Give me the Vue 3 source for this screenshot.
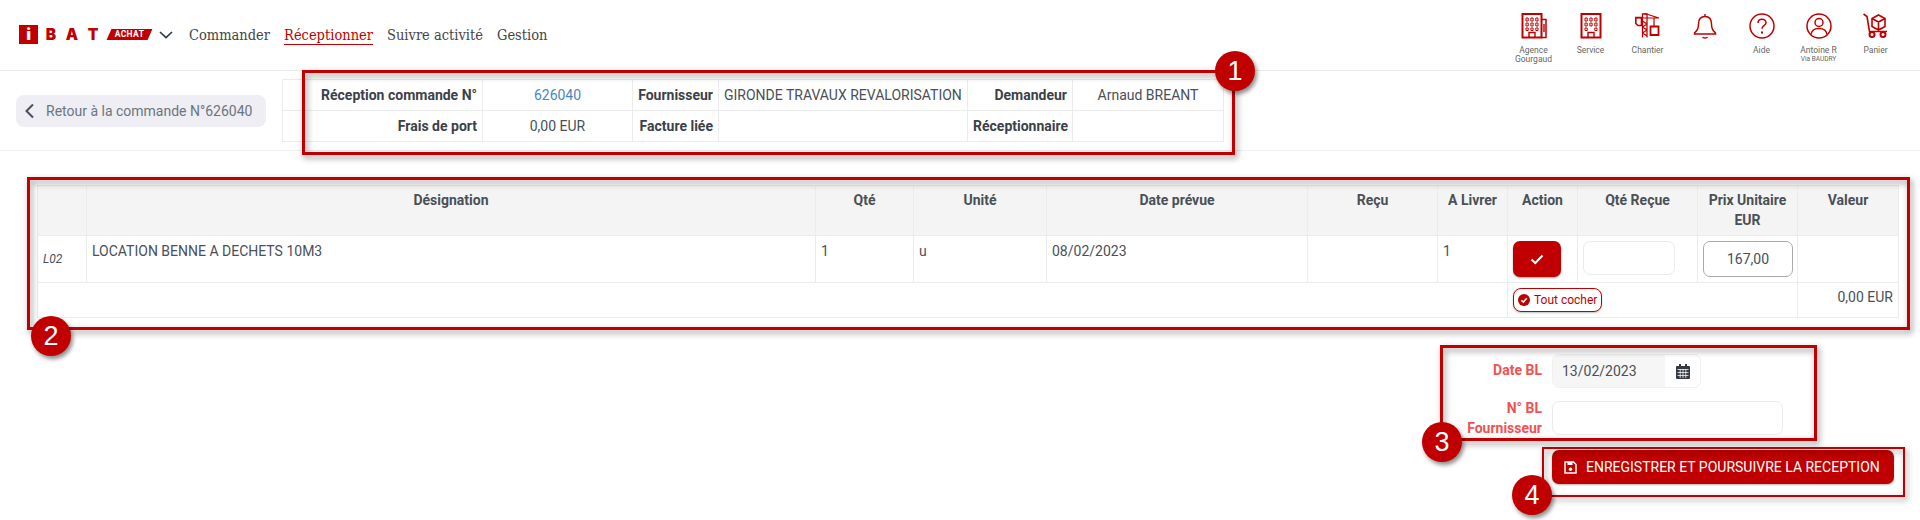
<template>
  <div class="page">
    <header class="topbar">
      <div class="brand">
        <span class="brand-i">i</span>
        <span class="brand-letter">B</span>
        <span class="brand-letter">A</span>
        <span class="brand-letter">T</span>
        <span class="brand-tag"><span>ACHAT</span></span>
        <svg class="brand-chevron" width="14" height="8" viewBox="0 0 14 8" fill="none">
          <path d="M1 1l6 5.600L13 1" stroke="#2f3b4c" stroke-width="1.700" />
        </svg>
      </div>
      <nav class="menu">
        <a v-for="item in menu" :key="item" class="menu-item" :class="{ active: item === 'Réceptionner' }">{{ item }}</a>
      </nav>
      <div class="shortcuts">
        <div class="shortcut">
          <svg width="26" height="26" viewBox="0 0 26 26" fill="none" stroke="#c00000">
            <path d="M1.500 1h19v23.500h-19z" stroke-width="2" />
            <path d="M20.500 6.500h4.500v18h-4.500" stroke-width="1.500" />
            <path d="M8 24.500v-5h6v5M23 11v8" stroke-width="1.400" />
            <path d="M5 5h2.200v3H5zM9.900 5h2.200v3H9.900zM14.800 5H17v3h-2.200zM5 10h2.200v3H5zM9.900 10h2.200v3H9.900zM14.800 10H17v3h-2.200zM5 15h2.200v2.500H5zM9.900 15h2.200v2.500H9.900zM14.800 15H17v2.500h-2.200z" stroke-width="1" />
          </svg>
          <span>Agence<br />Gourgaud</span>
        </div>
        <div class="shortcut">
          <svg width="26" height="26" viewBox="0 0 26 26" fill="none" stroke="#c00000">
            <path d="M3.500 1h19v23.500h-19z" stroke-width="2" />
            <path d="M10 24.500v-5h6v5" stroke-width="1.400" />
            <path d="M7 5h2.200v3H7zM11.900 5h2.200v3h-2.200zM16.800 5H19v3h-2.200zM7 10h2.200v3H7zM11.900 10h2.200v3h-2.200zM16.800 10H19v3h-2.200zM7 15h2.200v2.500H7zM16.800 15H19v2.500h-2.200z" stroke-width="1" />
          </svg>
          <span>Service</span>
        </div>
        <div class="shortcut">
          <svg width="26" height="26" viewBox="0 0 26 26" fill="none" stroke="#c00000">
            <path d="M7.500 24.500V1h4.500v23.500M7.500 8l4.500 3M12 11l-4.500 3M7.500 14l4.500 3M12 17l-4.500 3M7.500 20l4.500 3" stroke-width="1.300" />
            <path d="M9.500 .5L24 5M.8 5H24M19 5v8" stroke-width="1.200" />
            <path d="M.8 4.500h5.700v8H3L.8 10.500z" stroke-width="1.600" />
            <path d="M15.500 13.500h8v8.500h-8z" stroke-width="1.800" />
          </svg>
          <span>Chantier</span>
        </div>
        <div class="shortcut">
          <svg width="24" height="26" viewBox="0 0 24 26" fill="none" stroke="#c00000" stroke-width="1.500">
            <path d="M12 1v2.500M12 3.500c-4.500 0-6.500 3.500-6.500 7.500 0 5-1.500 6.500-4 9v1h21v-1c-2.500-2.500-4-4-4-9 0-4-2-7.500-6.500-7.500z" />
            <path d="M9.500 24c.6 1.300 4.400 1.300 5 0" />
          </svg>
          <span></span>
        </div>
        <div class="shortcut">
          <svg width="26" height="26" viewBox="0 0 26 26" fill="none" stroke="#c00000" stroke-width="1.500">
            <circle cx="13" cy="13" r="12" />
            <path d="M9 10c0-2.500 2-3.800 4-3.800s4 1.300 4 3.500c0 3-4 3-4 6" />
            <path d="M12 18.500h2v2h-2z" fill="#c00000" stroke="none" />
          </svg>
          <span>Aide</span>
        </div>
        <div class="shortcut">
          <svg width="26" height="26" viewBox="0 0 26 26" fill="none" stroke="#c00000" stroke-width="1.500">
            <circle cx="13" cy="13" r="12" />
            <circle cx="13" cy="9.500" r="4" />
            <path d="M5 21.500c.5-4 3.500-6 8-6s7.500 2 8 6" />
          </svg>
          <span>Antoine R<small>Via BAUDRY</small></span>
        </div>
        <div class="shortcut">
          <svg width="26" height="26" viewBox="0 0 26 26" fill="none" stroke="#c00000">
            <path d="M.5 1L4 3.500l2.500 15H24" stroke-width="1.600" />
            <path d="M15.500 2l6.500 3.500v8l-6.500 3.500-6.500-3.500v-8zM9 5.500l6.500 3.500L22 5.500M15.500 9v8" stroke-width="1.600" />
            <circle cx="9" cy="21.500" r="2.500" stroke-width="2" />
            <circle cx="20" cy="21.500" r="2.500" stroke-width="2" />
          </svg>
          <span>Panier</span>
        </div>
      </div>
    </header>

    <section class="summary">
      <button class="back">
        <svg width="11" height="16" viewBox="0 0 11 16" fill="none">
          <path d="M9 1.500L2.500 8 9 14.500" stroke="#495057" stroke-width="2" />
        </svg>
        Retour à la commande N°626040
      </button>
      <table class="info">
        <colgroup>
          <col class="c1" /><col class="c2" /><col class="c3" /><col class="c4" /><col class="c5" /><col class="c6" />
        </colgroup>
        <tbody>
          <tr>
            <th>Réception commande N°</th>
            <td class="center link">626040</td>
            <th>Fournisseur</th>
            <td>GIRONDE TRAVAUX REVALORISATION</td>
            <th>Demandeur</th>
            <td class="center">Arnaud BREANT</td>
          </tr>
          <tr>
            <th>Frais de port</th>
            <td class="center">0,00 EUR</td>
            <th>Facture liée</th>
            <td></td>
            <th>Réceptionnaire</th>
            <td></td>
          </tr>
        </tbody>
      </table>
    </section>

    <table class="lines">
      <colgroup>
        <col v-for="w in lineCols" :key="w.key" :class="w.key" />
      </colgroup>
      <thead>
        <tr>
          <th></th>
          <th>Désignation</th>
          <th>Qté</th>
          <th>Unité</th>
          <th>Date prévue</th>
          <th>Reçu</th>
          <th>A Livrer</th>
          <th>Action</th>
          <th>Qté Reçue</th>
          <th>Prix Unitaire<br />EUR</th>
          <th>Valeur</th>
        </tr>
      </thead>
      <tbody>
        <tr class="row">
          <td class="ref">L02</td>
          <td>LOCATION BENNE A DECHETS 10M3</td>
          <td>1</td>
          <td>u</td>
          <td>08/02/2023</td>
          <td></td>
          <td>1</td>
          <td class="tight">
            <button class="check">
              <svg width="14" height="11" viewBox="0 0 14 11" fill="none">
                <path d="M1.500 5.500l3.800 3.500 7.200-7.500" stroke="#fff" stroke-width="2" />
              </svg>
            </button>
          </td>
          <td class="tight"><div class="qty"></div></td>
          <td class="tight"><div class="price">167,00</div></td>
          <td></td>
        </tr>
        <tr class="foot">
          <td colspan="7"></td>
          <td colspan="3" class="tight">
            <button class="all">
              <svg width="12" height="12" viewBox="0 0 12 12">
                <circle cx="6" cy="6" r="6" fill="#c00000" />
                <path d="M3.300 6.200l2 1.900 3.500-3.800" fill="none" stroke="#fff" stroke-width="1.500" />
              </svg>
              Tout cocher
            </button>
          </td>
          <td class="total">0,00 EUR</td>
        </tr>
      </tbody>
    </table>

    <form class="delivery">
      <label class="field-label single">Date BL</label>
      <div class="date-group">
        <span class="date-value">13/02/2023</span>
        <span class="date-icon">
          <svg width="14" height="15" viewBox="0 0 14 15">
            <path d="M3 0h2v2h4V0h2v2h2a1 1 0 0 1 1 1v11a1 1 0 0 1-1 1H1a1 1 0 0 1-1-1V3a1 1 0 0 1 1-1h2z" fill="#343a40" />
            <path d="M1.500 5.500h11M1.500 8.500h11M1.500 11.500h11M4.200 5v9M7 5v9M9.800 5v9" stroke="#f4f4f4" stroke-width=".8" />
          </svg>
        </span>
      </div>
      <label class="field-label">N° BL<br />Fournisseur</label>
      <div class="text-input"></div>
    </form>

    <button class="save">
      <svg width="13" height="13" viewBox="0 0 13 13" fill="none">
        <path d="M1 1h8.500L12 3.500V12H1z" stroke="#fff" stroke-width="1.500" />
        <path d="M3.500 1h5v3h-5z" fill="#fff" />
        <circle cx="6.500" cy="8.300" r="1.700" fill="#fff" />
      </svg>
      ENREGISTRER ET POURSUIVRE LA RECEPTION
    </button>

    <!-- callouts drawn over the screen -->
    <div class="callout box-1"></div>
    <div class="callout box-2"></div>
    <div class="callout box-3"></div>
    <div class="callout box-4"></div>
    <div class="badge badge-1">1</div>
    <div class="badge badge-2">2</div>
    <div class="badge badge-3">3</div>
    <div class="badge badge-4">4</div>
  </div>
</template>

<script setup>
const menu = ['Commander', 'Réceptionner', 'Suivre activité', 'Gestion'];
const lineCols = ['l1', 'l2', 'l3', 'l4', 'l5', 'l6', 'l7', 'l8', 'l9', 'l10', 'l11'].map((key) => ({ key }));
</script>

<style>
html,
body {
  margin: 0;
  background: #fff;
}
</style>

<style scoped>
.page {
  position: relative;
  width: 1920px;
  height: 520px;
  overflow: hidden;
  font-family: Roboto, "Liberation Sans", sans-serif;
  font-size: 14px;
  line-height: 20px;
  color: #495057;
}

.topbar {
  display: flex;
  align-items: flex-start;
  height: 70px;
  border-bottom: 1px solid #e9e9e9;
  padding-left: 19px;
}

.brand {
  display: flex;
  align-items: center;
  height: 19px;
  margin-top: 25px;
  color: #c00000;
  font-family: Inter, Roboto, sans-serif;
  font-weight: 900;
}

.brand-i {
  width: 19px;
  height: 19px;
  background: #c00000;
  color: #fff;
  text-align: center;
  font-size: 16px;
  line-height: 19px;
  margin-right: 3px;
}

.brand-letter {
  width: 20px;
  margin-right: 1px;
  font-size: 15.500px;
  text-align: center;
}

.brand-tag {
  width: 41px;
  height: 11px;
  margin-left: 5px;
  background: #c00000;
  transform: skewX(-24deg);
  color: #fff;
  font-family: Roboto, sans-serif;
  font-size: 8.500px;
  font-weight: 700;
  letter-spacing: 0.4px;
  line-height: 11px;
  text-align: center;
}

.brand-tag span {
  display: block;
  transform: skewX(24deg);
}

.brand-chevron {
  margin-left: 9px;
}

.menu {
  display: flex;
  gap: 14px;
  margin-left: 16px;
  margin-top: 25px;
  font-family: "DejaVu Serif Condensed", "DejaVu Serif", serif;
  font-size: 14.500px;
}

.menu-item {
  color: #444;
  height: 19px;
  white-space: nowrap;
}

.menu-item.active {
  color: #c00000;
  border-bottom: 1px solid #c00000;
}

.shortcuts {
  display: flex;
  margin-left: auto;
  margin-right: 16px;
  margin-top: 13px;
}

.shortcut {
  display: flex;
  flex-direction: column;
  align-items: center;
  width: 57px;
  height: 50px;
  font-size: 8.500px;
  line-height: 9px;
  color: #666;
  text-align: center;
}

.shortcut svg {
  flex: none;
  margin-bottom: 7px;
}

.shortcut small {
  display: block;
  font-size: 6.500px;
  line-height: 9px;
}

.summary {
  display: flex;
  align-items: flex-start;
  padding-top: 8px;
  box-sizing: border-box;
  height: 80px;
  border-bottom: 1px solid #f0f0f0;
}

.back {
  display: flex;
  align-items: center;
  gap: 11px;
  width: 250px;
  height: 32px;
  margin: 16px 0 0 16px;
  padding: 0 0 0 8px;
  border: 0;
  border-radius: 8px;
  background: #eeeef4;
  color: #6c757d;
  font: inherit;
  white-space: nowrap;
}

.info {
  margin-left: 16px;
  width: 941px;
  table-layout: fixed;
  border-collapse: collapse;
}

.info .c1 { width: 200px; }
.info .c2 { width: 150px; }
.info .c3 { width: 86px; }
.info .c4 { width: 249px; }
.info .c5 { width: 105px; }
.info .c6 { width: 151px; }

.info th,
.info td {
  height: 31px;
  padding: 0 5px;
  box-sizing: border-box;
  border: 1px solid #ececec;
  white-space: nowrap;
}

.info th {
  text-align: right;
  font-weight: 700;
  color: #3c4148;
}

.center {
  text-align: center;
}

.link {
  color: #4a86c0;
}

.lines {
  width: 1861px;
  margin: 34px 0 0 37px;
  table-layout: fixed;
  border-collapse: collapse;
}

.l1 { width: 49px; }
.l2 { width: 729px; }
.l3 { width: 98px; }
.l4 { width: 133px; }
.l5 { width: 261px; }
.l6 { width: 130px; }
.l7 { width: 70px; }
.l8 { width: 70px; }
.l9 { width: 120px; }
.l10 { width: 100px; }
.l11 { width: 101px; }

.lines th,
.lines td {
  padding: 5px;
  box-sizing: border-box;
  border: 1px solid #ececec;
  vertical-align: top;
  color: #495057;
}

.lines th {
  height: 50px;
  padding-top: 4px;
  background: #f4f4f4;
  font-weight: 700;
  text-align: center;
}

.row td {
  height: 47px;
}

.foot td {
  height: 35px;
}

.lines td.ref {
  vertical-align: middle;
  font-size: 12px;
  font-style: italic;
}

.check {
  display: flex;
  align-items: center;
  justify-content: center;
  width: 48px;
  height: 36px;
  border: 0;
  border-radius: 7px;
  background: #c00000;
  box-shadow: 0 1px 2px rgba(0, 0, 0, 0.35);
  padding: 0;
}

.qty {
  width: 92px;
  height: 34px;
  box-sizing: border-box;
  border: 1px solid #ebebeb;
  border-radius: 7px;
}

.price {
  width: 90px;
  height: 36px;
  box-sizing: border-box;
  border: 1px solid #aaa;
  border-radius: 7px;
  text-align: center;
  line-height: 34px;
}

.all {
  display: flex;
  align-items: center;
  gap: 4px;
  width: 89px;
  height: 24px;
  padding: 0 0 0 4px;
  box-sizing: border-box;
  border: 1px solid #c00000;
  border-radius: 8px;
  background: #fff;
  color: #c00000;
  font: inherit;
  font-size: 12px;
  white-space: nowrap;
  box-shadow: 0 1px 2px rgba(0, 0, 0, 0.25);
}

.lines td.total {
  text-align: right;
  padding-top: 4px;
}

.delivery {
  display: grid;
  grid-template-columns: 120px 231px;
  grid-template-rows: 34px 34px;
  column-gap: 10px;
  row-gap: 13px;
  margin: 36px 0 0 1422px;
}

.field-label {
  text-align: right;
  color: #f05252;
  font-weight: 700;
}

.field-label.single {
  line-height: 32px;
}

.field-label:not(.single) {
  margin-top: -3px;
}

.date-group {
  display: flex;
  width: 149px;
  height: 34px;
  box-sizing: border-box;
  border: 1px solid #f0f0f0;
  border-radius: 7px;
  overflow: hidden;
}

.date-value {
  width: 112px;
  background: #f6f6f6;
  padding-left: 9px;
  box-sizing: border-box;
  line-height: 32px;
}

.date-icon {
  display: flex;
  align-items: center;
  justify-content: center;
  flex: 1;
}

.text-input {
  height: 34px;
  box-sizing: border-box;
  border: 1px solid #ebebeb;
  border-radius: 7px;
}

.save {
  display: flex;
  align-items: center;
  gap: 9px;
  width: 342px;
  height: 34px;
  margin: 15px 0 0 1552px;
  padding: 0 0 0 12px;
  border: 0;
  border-radius: 7px;
  background: #c00000;
  color: #fff;
  font: inherit;
  white-space: nowrap;
  box-shadow: 0 1px 2px rgba(0, 0, 0, 0.3);
}

.callout {
  position: absolute;
  box-sizing: border-box;
  border: 3px solid #c00000;
  filter: drop-shadow(2px 3px 3px rgba(0, 0, 0, 0.45));
}

.box-1 { left: 302px; top: 70px; width: 933px; height: 85px; }
.box-2 { left: 27px; top: 177px; width: 1883px; height: 153px; }
.box-3 { left: 1440px; top: 345px; width: 377px; height: 96px; }
.box-4 { left: 1542px; top: 447px; width: 363px; height: 50px; border-width: 2px; }

.badge {
  position: absolute;
  width: 40px;
  height: 40px;
  border-radius: 50%;
  background: #c00000;
  color: #fff;
  font-family: "Liberation Sans", Arial, sans-serif;
  font-size: 27px;
  line-height: 40px;
  text-align: center;
  box-shadow: 2px 3px 4px rgba(0, 0, 0, 0.45);
}

.badge-1 { left: 1215px; top: 51px; }
.badge-2 { left: 31px; top: 316px; }
.badge-3 { left: 1422px; top: 422px; }
.badge-4 { left: 1512px; top: 475px; }
</style>
